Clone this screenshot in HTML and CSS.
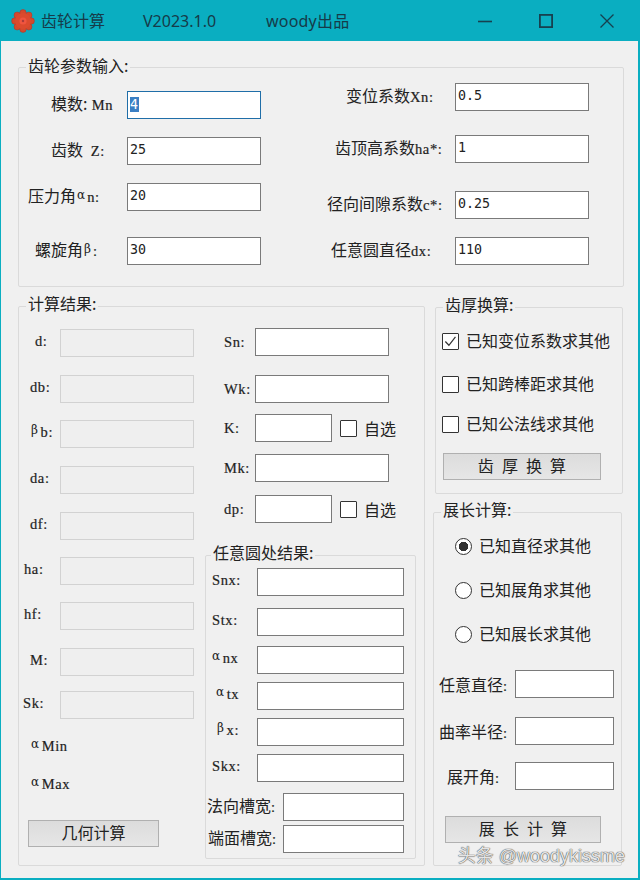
FILE: index.html
```html
<!DOCTYPE html>
<html lang="zh-CN">
<head>
<meta charset="utf-8">
<title>齿轮计算</title>
<link rel="stylesheet" href="styles.css">
</head>
<body>
<div class="window">
  <header class="titlebar">
    <svg class="gear" viewBox="0 0 24 24" width="24" height="24" aria-hidden="true">
      <g fill="#d4492c" stroke="#a8342a" stroke-width=".5">
        <circle cx="12" cy="3.8" r="3.2"/><circle cx="12" cy="20.2" r="3.2"/><circle cx="3.8" cy="12" r="3.2"/><circle cx="20.2" cy="12" r="3.2"/>
        <circle cx="6.2" cy="6.2" r="3.2"/><circle cx="17.8" cy="6.2" r="3.2"/><circle cx="6.2" cy="17.8" r="3.2"/><circle cx="17.8" cy="17.8" r="3.2"/>
      </g>
      <circle cx="12" cy="12" r="8" fill="#dc4a2e"/>
      <circle cx="12" cy="12" r="3.6" fill="#f0553f"/>
      <circle cx="12" cy="12" r="1.2" fill="#a93b3b"/>
    </svg>
    <span class="t-name">齿轮计算</span>
    <span class="t-ver">V2023.1.0</span>
    <span class="t-by">woody出品</span>
    <div class="win-btns">
      <svg width="16" height="16" viewBox="0 0 16 16"><path d="M1 8.5h14" stroke="#17404f" stroke-width="1.6"/></svg>
      <svg width="16" height="16" viewBox="0 0 16 16"><rect x="1.9" y="1.9" width="12.2" height="12.2" fill="none" stroke="#17404f" stroke-width="1.8"/></svg>
      <svg width="16" height="16" viewBox="0 0 16 16"><path d="M1.5 1.5l13 13M14.5 1.5l-13 13" stroke="#17404f" stroke-width="1.3"/></svg>
    </div>
  </header>

  <main class="content">
    <section class="group params">
      <h2 class="legend">齿轮参数输入:</h2>
      <div class="col col-pl">
        <div class="row"><label class="lbl m32">模数:<span class="lat">&nbsp;Mn</span></label><input class="field w134 focus-f" aria-label="模数"><span class="sel">4</span></div>
        <div class="row"><label class="lbl m32">齿数 <span class="lat">&nbsp;Z:</span></label><input class="field w134" value="25"></div>
        <div class="row"><label class="lbl m9">压力角<span class="greek">α</span><span class="lat">n:</span></label><input class="field w134" value="20"></div>
        <div class="row"><label class="lbl m16">螺旋角<span class="greek">β</span><span class="lat">:</span></label><input class="field w134" value="30"></div>
      </div>
      <div class="col col-pr">
        <div class="row"><label class="lbl m26">变位系数<span class="lat">Xn:</span></label><input class="field w134" value="0.5"></div>
        <div class="row"><label class="lbl m15">齿顶高系数<span class="lat">ha*:</span></label><input class="field w134" value="1"></div>
        <div class="row"><label class="lbl m7">径向间隙系数<span class="lat">c*:</span></label><input class="field w134" value="0.25"></div>
        <div class="row"><label class="lbl m11">任意圆直径<span class="lat">dx:</span></label><input class="field w134" value="110"></div>
      </div>
    </section>

    <div class="lower">
      <section class="group results">
        <h2 class="legend">计算结果:</h2>
        <div class="col col-a">
          <div class="row"><label class="lbl lat m16">d:</label><input class="field off w134" disabled></div>
          <div class="row"><label class="lbl lat m11">db:</label><input class="field off w134" disabled></div>
          <div class="row"><label class="lbl lat m11"><span class="greek">β</span>b:</label><input class="field off w134" disabled></div>
          <div class="row"><label class="lbl lat m11">da:</label><input class="field off w134" disabled></div>
          <div class="row"><label class="lbl lat m11">df:</label><input class="field off w134" disabled></div>
          <div class="row"><label class="lbl lat m5">ha:</label><input class="field off w134" disabled></div>
          <div class="row"><label class="lbl lat m5">hf:</label><input class="field off w134" disabled></div>
          <div class="row"><label class="lbl lat m11">M:</label><input class="field off w134" disabled></div>
          <div class="row"><label class="lbl lat m4">Sk:</label><input class="field off w134" disabled></div>
          <div class="row"><label class="lbl lat m11"><span class="greek">α</span>Min</label></div>
          <div class="row"><label class="lbl lat m11"><span class="greek">α</span>Max</label></div>
          <button class="btn btn-geo">几何计算</button>
        </div>
        <div class="col-b">
          <div class="col col-m">
            <div class="row"><label class="lbl lat m19">Sn:</label><input class="field w134"></div>
            <div class="row"><label class="lbl lat m19">Wk:</label><input class="field w134"></div>
            <div class="row"><label class="lbl lat m19">K:</label><input class="field w77"><span class="box box-m"></span><span class="opt">自选</span></div>
            <div class="row"><label class="lbl lat m19">Mk:</label><input class="field w134"></div>
            <div class="row"><label class="lbl lat m19">dp:</label><input class="field w77"><span class="box box-m"></span><span class="opt">自选</span></div>
          </div>
          <section class="group anyc">
            <h2 class="legend">任意圆处结果:</h2>
            <div class="col col-s">
              <div class="row"><label class="lbl lat m6">Snx:</label><input class="field w147"></div>
              <div class="row"><label class="lbl lat m6">Stx:</label><input class="field w147"></div>
              <div class="row"><label class="lbl lat m5"><span class="greek">α</span>nx</label><input class="field w147"></div>
              <div class="row"><label class="lbl lat m9"><span class="greek">α</span>tx</label><input class="field w147"></div>
              <div class="row"><label class="lbl lat m10"><span class="greek">β</span>x:</label><input class="field w147"></div>
              <div class="row"><label class="lbl lat m6">Skx:</label><input class="field w147"></div>
              <div class="row row-wide"><label class="lbl m1">法向槽宽<span class="lat">:</span></label><input class="field w121"></div>
              <div class="row row-wide"><label class="lbl m2">端面槽宽<span class="lat">:</span></label><input class="field w121"></div>
            </div>
          </section>
        </div>
      </section>

      <div class="side">
        <section class="group thick">
          <h2 class="legend">齿厚换算:</h2>
          <div class="col col-t">
            <div class="check"><span class="box"><svg viewBox="0 0 16 16" width="15" height="15"><path d="M2.5 8l3.8 4 7-9" fill="none" stroke="#333" stroke-width="1.3"/></svg></span>已知变位系数求其他</div>
            <div class="check"><span class="box"></span>已知跨棒距求其他</div>
            <div class="check"><span class="box"></span>已知公法线求其他</div>
            <button class="btn btn-thick">齿 厚 换 算</button>
          </div>
        </section>
        <section class="group ext">
          <h2 class="legend">展长计算:</h2>
          <div class="col col-e">
            <div class="radio"><span class="dot on"></span>已知直径求其他</div>
            <div class="radio"><span class="dot"></span>已知展角求其他</div>
            <div class="radio"><span class="dot"></span>已知展长求其他</div>
            <div class="row"><label class="lbl m5">任意直径<span class="lat">:</span></label><input class="field w99"></div>
            <div class="row"><label class="lbl m5">曲率半径<span class="lat">:</span></label><input class="field w99"></div>
            <div class="row"><label class="lbl m13">展开角<span class="lat">:</span></label><input class="field w99"></div>
            <button class="btn btn-ext">展 长 计 算</button>
          </div>
        </section>
      </div>
    </div>
  </main>
  <div class="watermark">头条 @woodykissme</div>
</div>
</body>
</html>
```

FILE: styles.css
```css
* { box-sizing: border-box; }
html, body { margin: 0; padding: 0; }
body {
  width: 640px;
  height: 880px;
  overflow: hidden;
  font: 16px/20px "Noto Sans CJK SC", sans-serif;
  color: #222;
  background: #f0f0f0;
}
.window {
  position: relative;
  width: 640px;
  height: 880px;
  display: flex;
  flex-direction: column;
  background: #f0f0f0;
  border: solid #0aaec1;
  border-width: 0 2px 2px 1px;
}

/* title bar */
.titlebar {
  flex: none;
  height: 41px;
  margin: 0 -2px 0 -1px;
  display: flex;
  align-items: center;
  background: #0aaec1;
  color: #163b49;
  font-family: "Noto Sans", "Noto Sans CJK SC", sans-serif;
  font-size: 16px;
}
.gear { margin-left: 11px; flex: none; }
.t-name { margin-left: 6px; width: 102px; }
.t-ver { width: 123px; }
.t-by { letter-spacing: .2px; }
.win-btns { margin-left: auto; margin-right: 25px; display: flex; gap: 45px; }
.win-btns svg { display: block; }

/* content */
.content { flex: 1; padding: 26px 0 0 17px; }
.group {
  position: relative;
  border: 1px solid #dadada;
  border-radius: 2px;
}
.legend {
  position: absolute;
  left: 7px;
  top: -14px;
  margin: 0;
  padding: 0 2px;
  font: inherit;
  line-height: 20px;
  background: #f0f0f0;
  white-space: nowrap;
}
.col { display: grid; align-content: start; }

/* a row: label slot, field, then optional checkbox and caption */
.row {
  position: relative;
  display: grid;
  grid-template-columns: var(--slot) auto auto auto;
  justify-content: start;
  align-items: center;
  height: 28px;
}
.lbl { white-space: nowrap; padding-bottom: 4px; }
.lat {
  font-family: "Liberation Serif", serif;
  font-size: 14.5px;
  letter-spacing: .6px;
  -webkit-text-stroke: .2px #222;
}
.greek {
  font-family: "DejaVu Serif", serif;
  font-size: 12px;
  position: relative;
  top: -3px;
  margin: 0 2px 0 1px;
  -webkit-text-stroke: 0;
}
.field {
  height: 28px;
  margin: 0;
  padding: 0 2px 3px;
  border: 1px solid #7a7a7a;
  border-radius: 0;
  outline: 0;
  background: #fff;
  color: #222;
  font: 13.3px "DejaVu Sans Mono", monospace;
}
.off { background: #efefef; border-color: #d2d2d2; }
.focus-f { border-color: #1f6ea8; }
.sel {
  position: absolute;
  left: 111px;
  top: 6px;
  width: 9px;
  height: 15px;
  background: #3a7fc4;
  color: #fff;
  font: 13.3px/15px "DejaVu Sans Mono", monospace;
}
.w134 { width: 134px; }
.w77 { width: 77px; }
.w147 { width: 147px; }
.w121 { width: 121px; }
.w99 { width: 99px; }

/* label offsets within the slot */
.m1 { margin-left: 1px; } .m2 { margin-left: 2px; } .m4 { margin-left: 4px; }
.m5 { margin-left: 5px; } .m6 { margin-left: 6px; } .m7 { margin-left: 7px; }
.m9 { margin-left: 9px; } .m10 { margin-left: 10px; } .m11 { margin-left: 11px; }
.m13 { margin-left: 13px; } .m15 { margin-left: 15px; } .m16 { margin-left: 16px; }
.m19 { margin-left: 19px; } .m26 { margin-left: 26px; } .m32 { margin-left: 32px; }

/* parameter group */
.params { width: 606px; height: 220px; display: flex; }
.params .legend { top: -13px; }
.params .lbl { padding-bottom: 2px; }
.col-pl { --slot: 108px; width: 301px; padding-top: 23px; grid-template-rows: 46px 46px 54px 28px; }
.col-pr { --slot: 135px; padding-top: 15px; grid-template-rows: 52px 56px 46px 28px; }

/* lower area */
.lower { display: flex; margin-top: 19px; }
.results { width: 407px; height: 560px; display: flex; flex: none; }
.col-a {
  --slot: 41px;
  width: 186px;
  padding-top: 22px;
  grid-template-rows: 46px 45px 46px 46px 45px 45px 46px 43px 43px 38px 48px 27px;
}
.btn {
  font: inherit;
  color: #222;
  height: 27px;
  padding: 0 0 3px;
  border: 1px solid #b0b0b0;
  background: linear-gradient(#dcdcdc, #e6e6e6);
  border-radius: 0;
}
.btn-geo { width: 131px; margin-left: 9px; }
.col-b { width: 219px; }
.col-m { --slot: 50px; padding-top: 21px; grid-template-rows: 47px 39px 40px 41px 60px; height: 248px; }
.col-m .lbl { padding-bottom: 1px; }
.box {
  width: 17px;
  height: 17px;
  border: 1px solid #333;
  background: #fff;
  border-radius: 1px;
  display: flex;
  align-items: center;
  justify-content: center;
}
.box-m { margin-left: 8px; }
.opt { margin-left: 7px; }
.anyc { width: 211px; height: 304px; }
.anyc .legend { left: 5px; }
.col-s {
  --slot: 51px;
  padding-top: 12px;
  grid-template-rows: 40px 38px 36px 36px 36px 39px 32px 28px;
}
.row-wide { --slot: 77px; }
.row-wide .lbl { padding-bottom: 2px; }

/* right column */
.side { margin-left: 10px; margin-top: 1px; display: flex; flex-direction: column; }
.thick { width: 188px; height: 187px; }
.col-t { padding: 19px 0 0 6px; grid-template-rows: 43px 40px 43px 27px; }
.check, .radio {
  display: flex;
  align-items: center;
  height: 28px;
  padding-bottom: 2px;
  white-space: nowrap;
}
.check .box { margin: 0 7px -2px 0; flex: none; }
.btn-thick { width: 158px; margin-left: 1px; word-spacing: 4.5px; }
.ext { width: 189px; height: 354px; margin: 18px 0 0 -2px; }
.col-e {
  --slot: 81px;
  padding-top: 19px;
  grid-template-rows: 44px 44px 50px 47px 45px 54px 27px;
}
.col-e .lbl { padding: 2px 0 0; }
.radio { padding-left: 21px; }
.dot {
  flex: none;
  width: 17px;
  height: 17px;
  margin: 0 7px -2px 0;
  border: 1px solid #333;
  border-radius: 50%;
  background: #fff;
}
.dot.on { background: radial-gradient(circle, #333 0 4.5px, #fff 5px); }
.btn-ext { width: 156px; margin-left: 11px; word-spacing: 4.5px; }

.watermark {
  position: absolute;
  right: 13px;
  bottom: 12px;
  font: 18px/20px "Liberation Sans", "Noto Sans CJK SC", sans-serif;
  color: #e4e4e4;
  text-shadow: 0 0 1px #444, 0 0 1px #444;
}
```
